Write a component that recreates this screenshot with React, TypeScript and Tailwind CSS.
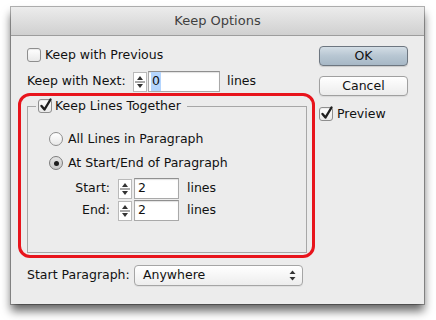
function Check({ checked }: { checked?: boolean }) {
  return (
    <span className="relative inline-block w-[14px] h-[14px] shrink-0 rounded-[3px] border border-[#8e8e8e] bg-gradient-to-b from-white to-[#e9e9e9] shadow-[inset_0_1px_1px_rgba(0,0,0,0.08)]">
      {checked && (
        <svg className="absolute left-[-1px] top-[-3px]" width="15" height="16" viewBox="0 0 15 16">
          <path d="M3.5 9 L6.5 12.5 L12.5 2.5" fill="none" stroke="#1f1f1f" strokeWidth="2.4" strokeLinejoin="round" strokeLinecap="round" />
        </svg>
      )}
    </span>
  );
}

function Radio({ on }: { on?: boolean }) {
  return (
    <span
      className={
        on
          ? "flex items-center justify-center w-[14px] h-[14px] shrink-0 rounded-full border border-[#7c7c7c] bg-gradient-to-b from-[#e4e4e4] to-[#c9c9c9]"
          : "flex items-center justify-center w-[14px] h-[14px] shrink-0 rounded-full border border-[#8e8e8e] bg-gradient-to-b from-white to-[#e8e8e8]"
      }
    >
      {on && <span className="w-[5px] h-[5px] rounded-full bg-[#1d1d1d]" />}
    </span>
  );
}

function Stepper() {
  return (
    <span className="flex flex-col w-[14px] h-[20px] shrink-0 border border-[#b9b9b9] bg-white">
      <svg width="12" height="18" viewBox="0 0 12 18">
        <path d="M3 7 L6 3 L9 7 Z" fill="#333" />
        <line x1="1" y1="9" x2="11" y2="9" stroke="#555" strokeWidth="1" />
        <path d="M3 11 L6 15 L9 11 Z" fill="#333" />
      </svg>
    </span>
  );
}

function Field({ value, w, selected }: { value: string; w: string; selected?: boolean }) {
  return (
    <span className={`flex items-center h-[21px] border border-[#a9a9a9] border-t-[#8f8f8f] bg-white pl-[2px] shadow-[inset_0_1px_1px_rgba(0,0,0,0.12)] ${w}`}>
      <span className={selected ? "bg-[#b4d5fe] px-[1px]" : "px-[1px]"}>{value}</span>
    </span>
  );
}

export default function App() {
  return (
    <div
      className="w-[436px] h-[320px] bg-white pt-[7px] pl-[11px] text-[12.5px] text-[#111]"
      style={{ fontFamily: '"DejaVu Sans", "Liberation Sans", sans-serif' }}
    >
      <div className="flex flex-col w-[413px] h-[297px] bg-[#ececec] shadow-[0_0_0_1px_rgba(0,0,0,0.3),0_7px_9px_rgba(0,0,0,0.6)]">
        <div className="flex items-center justify-center h-[29px] bg-gradient-to-b from-[#ececec] to-[#d0d0d0] border-b border-[#9d9d9d] text-[#3f3f3f] text-[13px]">
          Keep Options
        </div>

        <div className="flex flex-1 pl-[16px] pr-[16px] pt-[9px]">
          <div className="flex flex-col w-[292px]">
            <div className="flex items-center gap-[4px] h-[20px]">
              <Check />
              <span>Keep with Previous</span>
            </div>

            <div className="flex items-center h-[21px] mt-[6px]">
              <span className="w-[106px]">Keep with Next:</span>
              <Stepper />
              <span className="ml-[1px]">
                <Field value="0" w="w-[72px]" selected />
              </span>
              <span className="ml-[7px]">lines</span>
            </div>

            <div className="-ml-[9px] mt-[1px] w-[297px] h-[165px] rounded-[12px] border-[3px] border-[#e8141c] pl-[6px] pr-[5px] pb-[2px]">
              <fieldset className="h-full border border-[#a7a7a7]">
                <legend className="ml-[8px] pl-[2px] pr-[6px] h-[20px] flex items-center gap-[3px]">
                  <Check checked />
                  <span>Keep Lines Together</span>
                </legend>

                <div className="pl-[21px]">
                  <div className="flex items-center gap-[5px] h-[20px] mt-[13px]">
                    <Radio />
                    <span>All Lines in Paragraph</span>
                  </div>
                  <div className="flex items-center gap-[5px] h-[20px] mt-[4px]">
                    <Radio on />
                    <span>At Start/End of Paragraph</span>
                  </div>

                  <div className="flex items-center h-[21px] mt-[5px]">
                    <span className="w-[63px] text-right pr-[2px]">Start:</span>
                    <span className="ml-[6px]">
                      <Stepper />
                    </span>
                    <span className="ml-[2px]">
                      <Field value="2" w="w-[45px]" />
                    </span>
                    <span className="ml-[8px]">lines</span>
                  </div>
                  <div className="flex items-center h-[21px] mt-[1px]">
                    <span className="w-[63px] text-right pr-[2px]">End:</span>
                    <span className="ml-[6px]">
                      <Stepper />
                    </span>
                    <span className="ml-[2px]">
                      <Field value="2" w="w-[45px]" />
                    </span>
                    <span className="ml-[8px]">lines</span>
                  </div>
                </div>
              </fieldset>
            </div>

            <div className="flex items-center h-[21px] mt-[7px]">
              <span className="w-[107px]">Start Paragraph:</span>
              <div className="flex items-center justify-between w-[169px] h-[21px] rounded-[4px] border border-[#a5a5a5] bg-gradient-to-b from-white to-[#ededed] pl-[8px] pr-[6px] shadow-[0_1px_0_rgba(0,0,0,0.05)]">
                <span>Anywhere</span>
                <svg width="7" height="11" viewBox="0 0 7 11">
                  <path d="M0.5 4 L3.5 0.5 L6.5 4 Z" fill="#333" />
                  <path d="M0.5 7 L3.5 10.5 L6.5 7 Z" fill="#333" />
                </svg>
              </div>
            </div>
          </div>

          <div className="flex flex-col w-[89px] ml-auto">
            <button className="h-[20px] mt-[1px] rounded-[4px] border border-[#6d7680] bg-gradient-to-b from-[#d3dde5] via-[#b7c6d2] to-[#a7b8c6] text-[#111] shadow-[0_1px_1px_rgba(0,0,0,0.15)]">
              OK
            </button>
            <button className="h-[20px] mt-[10px] rounded-[4px] border border-[#a0a0a0] bg-gradient-to-b from-white to-[#ececec] text-[#111] shadow-[0_1px_1px_rgba(0,0,0,0.08)]">
              Cancel
            </button>
            <div className="flex items-center gap-[4px] h-[20px] mt-[8px]">
              <Check checked />
              <span>Preview</span>
            </div>
          </div>
        </div>
      </div>
    </div>
  );
}
